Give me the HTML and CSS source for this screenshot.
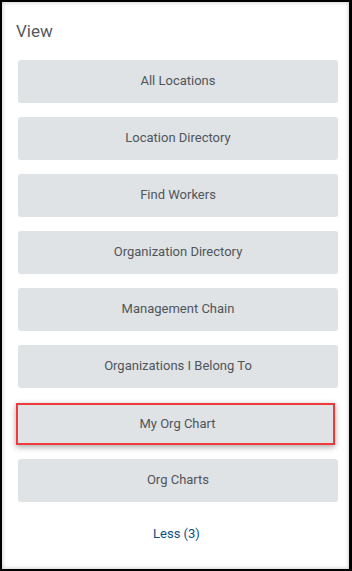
FILE: index.html
```html
<!DOCTYPE html>
<html>
<head>
<meta charset="utf-8">
<link rel="stylesheet" href="styles.css">
</head>
<body>
<div class="frame">
  <h2 class="title">View</h2>
  <div class="list">
    <div class="btn">All Locations</div>
    <div class="btn">Location Directory</div>
    <div class="btn">Find Workers</div>
    <div class="btn">Organization Directory</div>
    <div class="btn">Management Chain</div>
    <div class="btn">Organizations I Belong To</div>
    <div class="btn btn-highlight">My Org Chart</div>
    <div class="btn">Org Charts</div>
  </div>
  <div class="less"><a class="less-link">Less (3)</a></div>
</div>
</body>
</html>
```

FILE: styles.css
```css
html, body {
  margin: 0;
  padding: 0;
  background: #ffffff;
}
.frame {
  box-sizing: border-box;
  width: 352px;
  height: 571px;
  border-style: solid;
  border-color: #000000;
  border-width: 2px 3px 2px 2px;
  box-shadow: inset 0 0 4px rgba(0, 0, 0, 0.25);
  background: #ffffff;
  font-family: Roboto, "Liberation Sans", sans-serif;
  color: #4a4a4a;
}
.title {
  margin: 0;
  padding: 17px 0 0 14px;
  font-size: 17px;
  line-height: 24px;
  font-weight: 400;
  color: #555a60;
}
.list {
  display: flex;
  flex-direction: column;
  gap: 14px;
  padding: 17px 11px 0 16px;
}
.btn {
  box-sizing: border-box;
  height: 43px;
  padding-bottom: 2px;
  border-radius: 3px;
  background: #dfe3e6;
  display: flex;
  align-items: center;
  justify-content: center;
  font-size: 13px;
  color: #50555a;
}
.btn-highlight {
  height: 42px;
  margin: 1px 3px 0 -2px;
  padding-left: 4px;
  border: 2px solid #ee3a3a;
  border-radius: 0;
  box-shadow: 0 2px 6px rgba(0, 0, 0, 0.35);
}
.less {
  text-align: center;
  padding-top: 21px;
  padding-left: 2px;
}
.less-link {
  font-size: 13px;
  line-height: 16px;
  color: #0b4f86;
  font-weight: 400;
}
```
